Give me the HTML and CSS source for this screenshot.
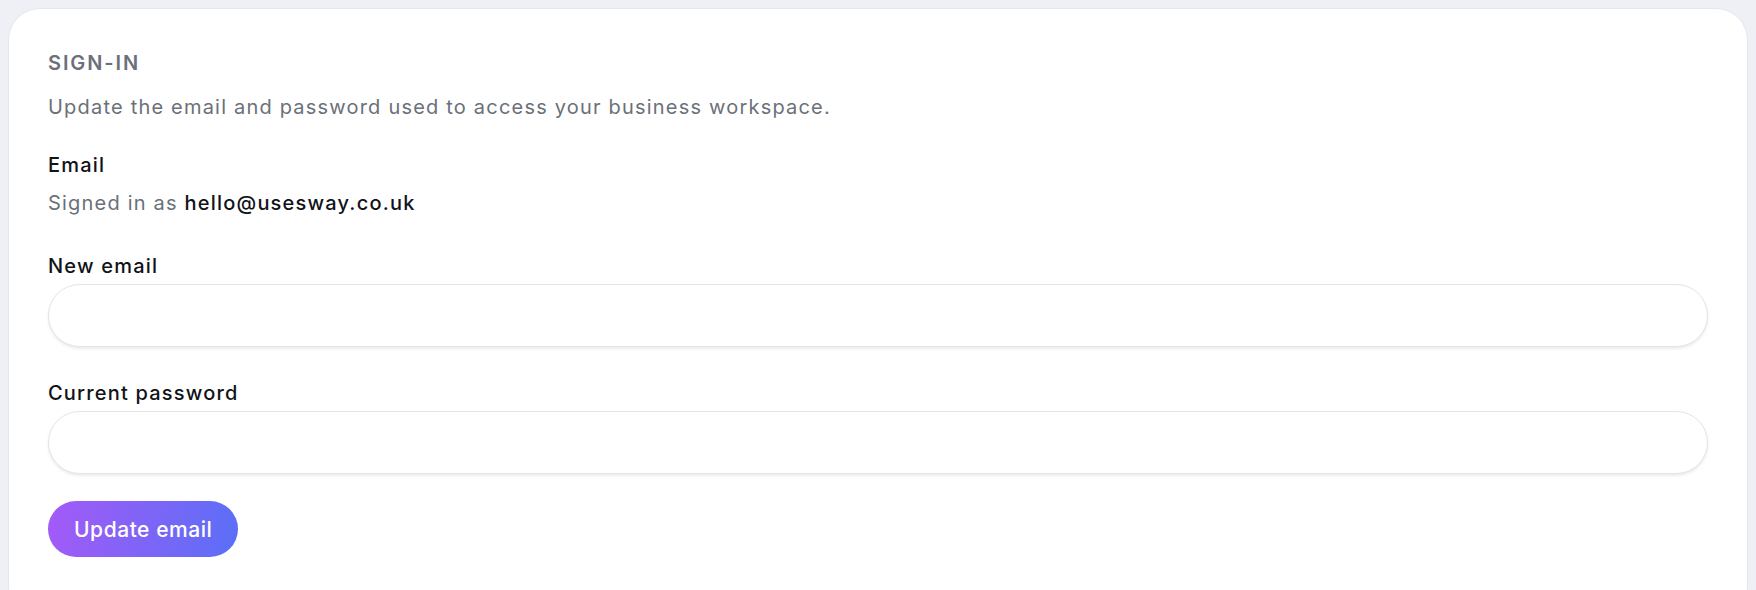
FILE: index.html
```html
<!DOCTYPE html>
<html lang="en">

<head>
    <meta charset="UTF-8">
    <meta name="viewport" content="width=device-width, initial-scale=1.0">
    <title>Sign-in settings</title>
    <link rel="stylesheet" href="styles.css">
</head>

<body>

    <section class="card">
        <h2 class="card-title">SIGN-IN</h2>
        <p class="card-desc">Update the email and password used to access your business workspace.</p>

        <div class="current">
            <div class="label">Email</div>
            <div class="signed">Signed in as <span class="signed-email">hello@usesway.co.uk</span></div>
        </div>

        <form class="form">
            <div class="field">
                <label for="new_email" class="label">New email</label>
                <input type="email" id="new_email" name="new_email" class="input">
            </div>

            <div class="field">
                <label for="password" class="label">Current password</label>
                <input type="password" id="password" name="password" class="input">
            </div>

            <div><button type="submit" class="btn">Update email</button></div>
        </form>
    </section>

</body>

</html>
```

FILE: styles.css
```css
body {
    margin: 8px;
    background-color: #eff0f6;
    font-family: Inter, "Noto Sans", sans-serif;
    color: #111318;
    letter-spacing: 1.2px;
}

.card {
    background-color: #fff;
    border: 1px solid #e4e6ec;
    border-radius: 32px;
    padding: 40px 39px 60px;
}

.card-title {
    margin: 0;
    font-size: 20px;
    line-height: 28px;
    font-weight: 600;
    letter-spacing: 1.9px;
    color: #6b7079;
}

.card-desc {
    margin: 16px 0 0;
    font-size: 20px;
    line-height: 28px;
    color: #6b7079;
}

.current {
    margin-top: 30px;
}

.label {
    display: block;
    font-size: 20px;
    line-height: 28px;
    font-weight: 500;
    color: #111318;
}

.signed {
    margin-top: 10px;
    font-size: 20px;
    line-height: 28px;
    color: #6b7079;
}

.signed-email {
    color: #111318;
    font-weight: 500;
}

.form {
    margin-top: 35px;
}

.field + .field {
    margin-top: 32px;
}

.input {
    display: block;
    box-sizing: border-box;
    width: 100%;
    height: 63px;
    margin-top: 4px;
    padding: 0 24px;
    border: 1px solid #e3e4e8;
    border-radius: 999px;
    background-color: #fff;
    box-shadow: 0 2px 3px rgba(0, 0, 0, 0.08);
    font-family: inherit;
    font-size: 20px;
    outline: 0;
}

.btn {
    margin-top: 27px;
    height: 56px;
    padding: 0 26px;
    border: 0;
    border-radius: 999px;
    background: linear-gradient(100deg, #a45af7, #5a6ff6);
    color: #fff;
    font-family: inherit;
    font-size: 21px;
    font-weight: 500;
    letter-spacing: 0.55px;
    cursor: pointer;
}
```
